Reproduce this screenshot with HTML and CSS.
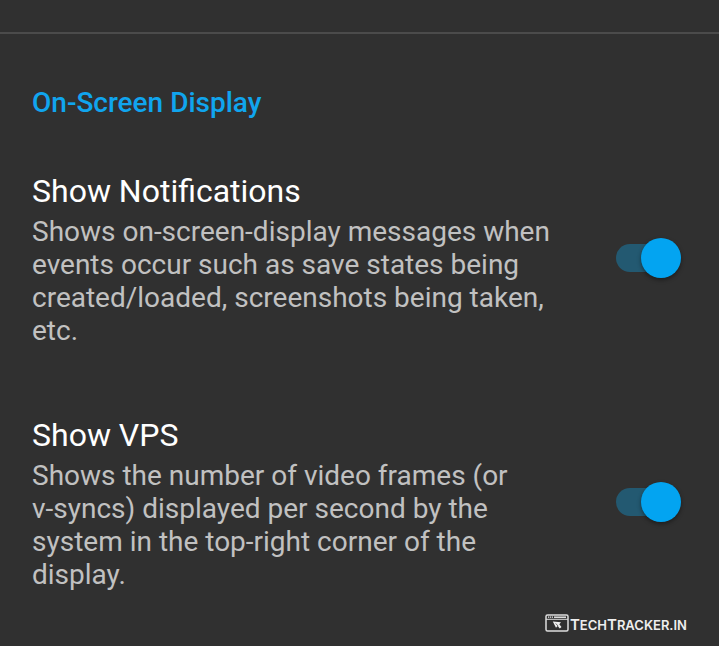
FILE: index.html
```
<!DOCTYPE html>
<html lang="en">
<head>
<meta charset="utf-8">
<meta name="viewport" content="width=device-width, initial-scale=1">
<title>On-Screen Display</title>
<link rel="stylesheet" href="styles.css">
</head>
<body>
<main class="settings">
  <h1 class="section-title">On-Screen Display</h1>
  <label class="setting">
    <span class="setting-text">
      <span class="setting-name">Show Notifications</span>
      <span class="setting-summary">Shows on-screen-display messages when events occur such as save states being created/loaded, screenshots being taken, etc.</span>
    </span>
    <input class="switch" type="checkbox" role="switch" checked>
  </label>
  <label class="setting">
    <span class="setting-text">
      <span class="setting-name">Show VPS</span>
      <span class="setting-summary">Shows the number of video frames (or <br>v-syncs) displayed per second by the system in the top-right corner of the display.</span>
    </span>
    <input class="switch" type="checkbox" role="switch" checked>
  </label>
</main>
<footer class="credit">
  <svg class="credit-icon" viewBox="0 0 24 18" aria-hidden="true">
    <rect x="1" y="1" width="22" height="16" rx="1.5" fill="none" stroke="#ddd" stroke-width="1.5"/>
    <path d="M1 5.3H23" stroke="#ddd" stroke-width="1"/>
    <path d="M3 3.2H8" stroke="#eee" stroke-width="1.3" stroke-dasharray="1.2 .7"/>
    <path d="M9 3.2H21" stroke="#eee" stroke-width="1.4"/>
    <path d="M7.8 7.4L16 8.3L14.3 10.2L16.5 13L14.8 14.6L12.6 12L11 13.8Z" fill="#eee"/>
    <path d="M10.7 9.4L13.2 12.2" stroke="#303030" stroke-width=".7"/>
  </svg>
  <span class="credit-name"><span class="cap">T</span>ech<span class="cap">T</span>racker.in</span>
</footer>
</body>
</html>
```
FILE: styles.css
```
* {
  box-sizing: border-box;
}

body {
  margin: 0;
  padding-top: 32px;
  background: #303030;
  color: #fff;
  font-family: Roboto, "Liberation Sans", sans-serif;
}

.settings {
  border-top: 2px solid #4b4b4b;
  padding: 52px 38px 0 32px;
}

.section-title {
  margin: 0 0 17px;
  color: #10a5ee;
  font-size: 28px;
  font-weight: 500;
  line-height: 33px;
}

.setting {
  display: flex;
  align-items: center;
  justify-content: space-between;
  gap: 64px;
  padding: 33px 0;
}

.setting-text {
  display: flex;
  flex: 1;
  flex-direction: column;
  gap: 5px;
  padding-top: 3px;
}

.setting-name {
  font-size: 32px;
  line-height: 38px;
}

.setting-summary {
  color: #c1c1c1;
  font-size: 28px;
  line-height: 33px;
}

.switch {
  appearance: none;
  display: grid;
  align-items: center;
  flex: none;
  width: 65px;
  height: 40px;
  margin: 0;
}

.switch::before,
.switch::after {
  content: "";
  grid-area: 1 / 1;
}

.switch::before {
  width: 56px;
  height: 28px;
  border-radius: 14px;
  background: #235971;
}

.switch::after {
  justify-self: end;
  width: 40px;
  height: 40px;
  border-radius: 50%;
  background: #03a4f1;
  box-shadow: 0 2px 4px rgb(0 0 0 / 40%);
}

.credit {
  display: flex;
  align-items: flex-end;
  justify-content: flex-end;
  gap: 1px;
  margin-top: -10px;
  padding-right: 32px;
  color: #eee;
  font-family: Inter, "Liberation Sans", sans-serif;
  font-size: 13px;
  font-weight: 600;
  line-height: 14px;
}

.credit-name {
  text-transform: uppercase;
}

.cap {
  font-size: 15px;
}

.credit-icon {
  width: 24px;
  height: 18px;
}
```
